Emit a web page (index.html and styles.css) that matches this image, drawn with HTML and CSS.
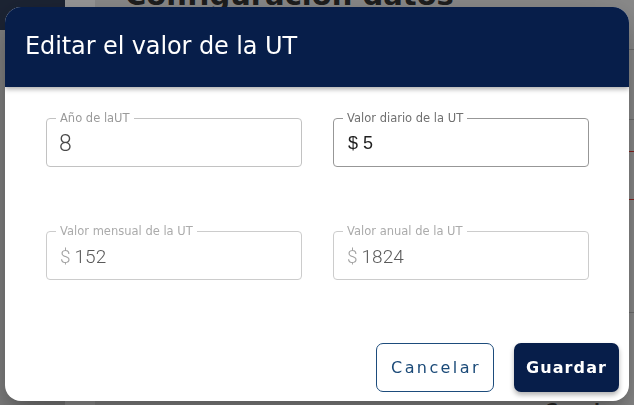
FILE: index.html
```html
<!DOCTYPE html>
<html lang="es">
<head>
<meta charset="utf-8">
<title>Editar el valor de la UT</title>
<link rel="stylesheet" href="styles.css">
</head>
<body>
<div class="app">
  <aside class="sidebar"><div class="brand"></div></aside>
  <div class="rail"></div>
  <main class="content">
    <h1 class="page-title">Configuración datos</h1>
    <div class="rows">
      <div class="row row-a"></div>
      <div class="row row-b"></div>
      <div class="row row-c"></div>
      <div class="row row-d"></div>
      <div class="row row-e"></div>
    </div>
    <div class="page-footer"><span class="page-action">Guardar</span></div>
  </main>
</div>
<div class="backdrop"></div>
<div class="dialog" role="dialog" aria-labelledby="dlg-title">
  <header class="dialog-header">
    <h2 class="dialog-title" id="dlg-title">Editar el valor de la UT</h2>
  </header>
  <div class="dialog-body">
    <div class="fields">
      <div class="field">
        <span class="field-label">Año de laUT</span>
        <div class="field-value large">8</div>
      </div>
      <div class="field field-active">
        <span class="field-label">Valor diario de la UT</span>
        <div class="field-value native">$ 5</div>
      </div>
      <div class="field field-disabled">
        <span class="field-label">Valor mensual de la UT</span>
        <div class="field-value"><span class="prefix">$</span>152</div>
      </div>
      <div class="field field-disabled">
        <span class="field-label">Valor anual de la UT</span>
        <div class="field-value"><span class="prefix">$</span>1824</div>
      </div>
    </div>
    <div class="actions">
      <button class="btn btn-outline" type="button">Cancelar</button>
      <button class="btn btn-primary" type="button">Guardar</button>
    </div>
  </div>
</div>
</body>
</html>
```
FILE: styles.css
```css
* { box-sizing: border-box; }

html, body {
  margin: 0;
  padding: 0;
  height: 100%;
  overflow: hidden;
}

body {
  font-family: "DejaVu Sans", sans-serif;
  background: #e8e8e8;
}

/* Background application */
.app {
  display: flex;
  height: 100vh;
}

.sidebar {
  width: 65px;
  background: #d5d5d5;
  flex: none;
}

.brand {
  height: 30px;
  background: #2f3c57;
}

.rail {
  width: 30px;
  background: #ffffff;
  flex: none;
}

.content {
  flex: 1;
  display: flex;
  flex-direction: column;
}

.page-title {
  margin: -19px 0 0 30px;
  font-family: "DejaVu Sans", sans-serif;
  font-weight: bold;
  font-size: 29px;
  line-height: 29px;
  color: #333333;
  white-space: nowrap;
}

.rows {
  display: flex;
  flex-direction: column;
}

.row {
  border-bottom: 1px solid #bbbbbb;
}

.row-a { height: 40px; }
.row-b { height: 70px; }
.row-c { height: 32px; border-bottom-color: #e53935; }
.row-d { height: 48px; border-bottom-color: #e53935; }
.row-e { height: 113px; }

.page-footer {
  margin-top: 87px;
  padding-left: 450px;
}

.page-action {
  font-weight: bold;
  font-size: 16px;
  color: #444444;
}

/* Overlay */
.backdrop {
  position: fixed;
  inset: 0;
  background: rgba(0, 0, 0, 0.4);
}

.dialog {
  position: absolute;
  left: 5px;
  top: 7px;
  width: 624px;
  height: 394px;
  background: #ffffff;
  border-radius: 16px;
  overflow: hidden;
  display: flex;
  flex-direction: column;
  box-shadow: 0 11px 15px -7px rgba(0, 0, 0, 0.2),
              0 24px 38px 3px rgba(0, 0, 0, 0.14),
              0 9px 46px 8px rgba(0, 0, 0, 0.12);
}

.dialog-header {
  height: 80px;
  flex: none;
  background: #071e4a;
  display: flex;
  align-items: center;
  padding: 0 0 2px 20px;
  box-shadow: 0 2px 5px rgba(0, 0, 0, 0.35);
  position: relative;
  z-index: 1;
}

.dialog-title {
  margin: 0;
  font-family: "DejaVu Sans", sans-serif;
  font-weight: normal;
  font-size: 24px;
  color: #ffffff;
  letter-spacing: -0.1px;
}

.dialog-body {
  flex: 1;
  display: flex;
  flex-direction: column;
  padding: 31px 10px 9px 41px;
}

.fields {
  display: grid;
  grid-template-columns: 256px 256px;
  column-gap: 31px;
  row-gap: 64px;
}

.field {
  position: relative;
  height: 49px;
  border: 1px solid #c2c2c2;
  border-radius: 4px;
}

.field-active {
  border-color: #979797;
}

.field-disabled {
  border-color: #cccccc;
}

.field-label {
  position: absolute;
  left: 9px;
  top: -7px;
  padding: 0 4px;
  background: #ffffff;
  font-size: 11.5px;
  line-height: 13px;
  color: #9a9a9a;
}

.field-active .field-label {
  color: #707070;
}

.field-disabled .field-label {
  color: #ababab;
}

.field-value {
  height: 100%;
  display: flex;
  align-items: center;
  padding: 2px 0 0 13px;
  font-family: Roboto, sans-serif;
  font-weight: 300;
  font-size: 20px;
  color: #4a4a4a;
}

.field-value.large {
  font-size: 23px;
  padding-left: 12px;
}

.field-value.native {
  font-family: "Liberation Sans", Arial, sans-serif;
  font-weight: normal;
  font-size: 18px;
  color: #1f1f1f;
  padding-left: 14px;
}

.field-disabled .field-value {
  color: #5a5a5a;
  font-size: 19px;
}

.prefix {
  color: #a2a2a2;
  margin-right: 4px;
}

.actions {
  margin-top: auto;
  display: flex;
  justify-content: flex-end;
  gap: 20px;
}

.btn {
  height: 49px;
  font-family: "DejaVu Sans", sans-serif;
  font-size: 16px;
  border-radius: 7px;
  cursor: pointer;
  padding: 0;
}

.btn-outline {
  width: 118px;
  background: #ffffff;
  border: 1px solid #1d4c7c;
  color: #1b4a78;
  letter-spacing: 2.4px;
  padding-left: 2px;
}

.btn-primary {
  width: 105px;
  background: #071e4a;
  border: none;
  color: #ffffff;
  font-weight: bold;
  letter-spacing: 1.1px;
  box-shadow: 0 3px 5px rgba(0, 0, 0, 0.3);
}
```
